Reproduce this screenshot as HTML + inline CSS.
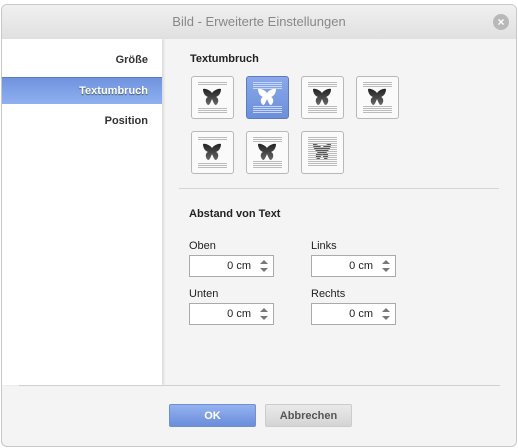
<!DOCTYPE html>
<html><head><meta charset="utf-8"><style>
*{margin:0;padding:0;box-sizing:border-box}
body{width:518px;height:448px;background:#fff;font-family:"Liberation Sans",sans-serif;font-size:11px;position:relative;overflow:hidden}
.dlg{position:absolute;left:1px;top:4px;width:516px;height:443px;background:#f4f4f4;border:1px solid #c8c8c8;border-radius:6px;overflow:hidden}
.title{position:absolute;left:0;top:0;width:100%;height:34px;background:linear-gradient(#f0f0f0,#e0e0e0);text-align:center;line-height:34px;font-size:13px;color:#888}
.close{position:absolute;right:7px;top:9px;width:16px;height:16px;border-radius:50%;background:#b8b8b8;color:#fff;font-size:12px;line-height:16px;text-align:center;font-weight:bold}
.left{position:absolute;left:0;top:34px;width:160px;height:346px;background:#fff;box-shadow:2px 0 2px #ddd}
.left div{position:absolute;right:14px;font-weight:bold;font-size:11px;color:#333}
.sel{position:absolute;left:0;top:38px;width:160px;height:27px;background:linear-gradient(#6f93de,#8fb0f0);border-top:1px solid #5b7cc4}
.ib{position:absolute;width:43px;height:43px;border:1px solid #b8b8b8;border-radius:3px;background:#fafafa}
.ib.a{background:linear-gradient(#8aa8ea,#6c8fda);border-color:#5b7cc4}
.lbl{position:absolute;font-size:11px;color:#222}
.inp{position:absolute;width:85px;height:22px;border:1px solid #aaa;background:#fff;font-size:11px;text-align:right;padding-right:22px;line-height:20px;color:#222}
.inp:after{content:"";position:absolute;right:5px;top:4px;border:4px solid transparent;border-bottom:4px solid #777;border-top:0}
.inp:before{content:"";position:absolute;right:5px;bottom:4px;border:4px solid transparent;border-top:4px solid #777;border-bottom:0}
.btn{position:absolute;top:399px;width:87px;height:23px;font-weight:bold;font-size:11px;text-align:center;line-height:23px;border-radius:2px}
</style></head><body>
<div class="dlg">
<div class="title">Bild - Erweiterte Einstellungen<div class="close">×</div></div>
<div class="left">
<div style="top:15px">Größe</div>
<div class="sel"></div>
<div style="top:46px;color:#fff;text-shadow:0 1px 1px #456">Textumbruch</div>
<div style="top:76px">Position</div>
</div>
<div class="lbl" style="left:188px;top:48px;font-weight:bold">Textumbruch</div>
<svg width="0" height="0" style="position:absolute"><defs>
<linearGradient id="g" x1="0" y1="0" x2="0" y2="1"><stop offset="0" stop-color="#222"/><stop offset="1" stop-color="#666"/></linearGradient>
<path id="bf" d="M10 6C8 3 3 1 1 2C1 6 3 9 6 10C3 11 3 16 6 18C8 18 9 14 10 12C11 14 12 18 14 18C17 16 17 11 14 10C17 9 19 6 19 2C17 1 12 3 10 6Z"/>
</defs></svg>
<div class="ib" style="left:189px;top:71px"><svg width="41" height="41"><g stroke="#bbb"><line x1="6" y1="5.5" x2="35" y2="5.5"/><line x1="6" y1="7.5" x2="35" y2="7.5"/><line x1="6" y1="31.5" x2="35" y2="31.5"/><line x1="6" y1="33.5" x2="35" y2="33.5"/><line x1="6" y1="35.5" x2="35" y2="35.5"/></g><use href="#bf" fill="url(#g)" transform="translate(10,10)"/></svg></div>
<div class="ib a" style="left:244px;top:71px"><svg width="41" height="41"><g stroke="#c8d6f6"><line x1="6" y1="5.5" x2="35" y2="5.5"/><line x1="6" y1="7.5" x2="35" y2="7.5"/><line x1="6" y1="9.5" x2="35" y2="9.5"/><line x1="6" y1="11.5" x2="35" y2="11.5"/><line x1="6" y1="29.5" x2="35" y2="29.5"/><line x1="6" y1="31.5" x2="35" y2="31.5"/><line x1="6" y1="33.5" x2="35" y2="33.5"/><line x1="6" y1="35.5" x2="35" y2="35.5"/></g><use href="#bf" fill="#fff" transform="translate(10,10)"/></svg></div>
<div class="ib" style="left:299px;top:71px"><svg width="41" height="41"><g stroke="#bbb"><line x1="6" y1="5.5" x2="35" y2="5.5"/><line x1="6" y1="7.5" x2="35" y2="7.5"/><line x1="6" y1="9.5" x2="35" y2="9.5"/><line x1="6" y1="29.5" x2="35" y2="29.5"/><line x1="6" y1="31.5" x2="35" y2="31.5"/><line x1="6" y1="33.5" x2="35" y2="33.5"/><line x1="6" y1="35.5" x2="35" y2="35.5"/></g><use href="#bf" fill="url(#g)" transform="translate(10,10)"/></svg></div>
<div class="ib" style="left:354px;top:71px"><svg width="41" height="41"><g stroke="#bbb"><line x1="6" y1="5.5" x2="35" y2="5.5"/><line x1="6" y1="7.5" x2="35" y2="7.5"/><line x1="6" y1="9.5" x2="35" y2="9.5"/><line x1="6" y1="29.5" x2="35" y2="29.5"/><line x1="6" y1="31.5" x2="35" y2="31.5"/><line x1="6" y1="33.5" x2="35" y2="33.5"/><line x1="6" y1="35.5" x2="35" y2="35.5"/></g><use href="#bf" fill="url(#g)" transform="translate(10,10)"/></svg></div>
<div class="ib" style="left:189px;top:126px"><svg width="41" height="41"><g stroke="#bbb"><line x1="6" y1="5.5" x2="35" y2="5.5"/><line x1="6" y1="7.5" x2="35" y2="7.5"/><line x1="6" y1="31.5" x2="35" y2="31.5"/><line x1="6" y1="33.5" x2="35" y2="33.5"/><line x1="6" y1="35.5" x2="35" y2="35.5"/></g><use href="#bf" fill="url(#g)" transform="translate(10,10)"/></svg></div>
<div class="ib" style="left:244px;top:126px"><svg width="41" height="41"><g stroke="#bbb"><line x1="6" y1="5.5" x2="35" y2="5.5"/><line x1="6" y1="7.5" x2="35" y2="7.5"/><line x1="6" y1="9.5" x2="35" y2="9.5"/><line x1="6" y1="29.5" x2="35" y2="29.5"/><line x1="6" y1="31.5" x2="35" y2="31.5"/><line x1="6" y1="33.5" x2="35" y2="33.5"/><line x1="6" y1="35.5" x2="35" y2="35.5"/></g><use href="#bf" fill="url(#g)" transform="translate(10,10)"/></svg></div>
<div class="ib" style="left:299px;top:126px"><svg width="41" height="41"><use href="#bf" fill="#555" transform="translate(10,10)"/><g stroke="#bbb"><line x1="6" y1="5.5" x2="35" y2="5.5"/><line x1="6" y1="7.5" x2="35" y2="7.5"/><line x1="6" y1="9.5" x2="35" y2="9.5"/><line x1="6" y1="11.5" x2="35" y2="11.5"/><line x1="6" y1="13.5" x2="35" y2="13.5"/><line x1="6" y1="15.5" x2="35" y2="15.5"/><line x1="6" y1="17.5" x2="35" y2="17.5"/><line x1="6" y1="19.5" x2="35" y2="19.5"/><line x1="6" y1="21.5" x2="35" y2="21.5"/><line x1="6" y1="23.5" x2="35" y2="23.5"/><line x1="6" y1="25.5" x2="35" y2="25.5"/><line x1="6" y1="27.5" x2="35" y2="27.5"/><line x1="6" y1="29.5" x2="35" y2="29.5"/><line x1="6" y1="31.5" x2="35" y2="31.5"/><line x1="6" y1="33.5" x2="35" y2="33.5"/></g></svg></div>
<div style="position:absolute;left:177px;top:183px;width:320px;height:1px;background:#d4d4d4"></div>
<div class="lbl" style="left:187px;top:203px;font-weight:bold">Abstand von Text</div>
<div class="lbl" style="left:187px;top:235px">Oben</div>
<div class="lbl" style="left:309px;top:235px">Links</div>
<div class="inp" style="left:187px;top:250px">0 cm</div>
<div class="inp" style="left:309px;top:250px">0 cm</div>
<div class="lbl" style="left:187px;top:283px">Unten</div>
<div class="lbl" style="left:309px;top:283px">Rechts</div>
<div class="inp" style="left:187px;top:298px">0 cm</div>
<div class="inp" style="left:309px;top:298px">0 cm</div>
<div style="position:absolute;left:17px;top:380px;width:481px;height:1px;background:#d0d0d0"></div>
<div class="btn" style="left:167px;background:linear-gradient(#95b2f0,#6a8dda);color:#fff;border:1px solid #6f8fd6">OK</div>
<div class="btn" style="left:263px;background:linear-gradient(#eaeaea,#d4d4d4);color:#555;border:1px solid #ccc">Abbrechen</div>
</div>
</body></html>
